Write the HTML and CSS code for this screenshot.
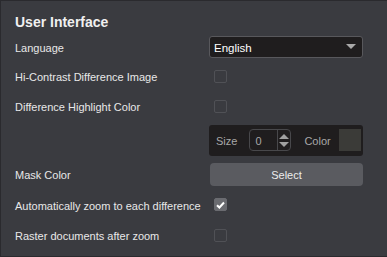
FILE: index.html
```html
<!DOCTYPE html>
<html lang="en">
<head>
  <meta charset="UTF-8" />
  <title>User Interface</title>
  <link rel="stylesheet" href="styles.css">
</head>
<body>
  <div class="panel">
    <div class="heading">User Interface</div>

    <div class="row row-first">
      <span class="label">Language</span>
      <div class="dropdown">
        <span class="dropdown-text">English</span>
        <span class="caret"></span>
      </div>
    </div>

    <div class="row">
      <span class="label">Hi-Contrast Difference Image</span>
      <span class="check"></span>
    </div>

    <div class="row">
      <span class="label">Difference Highlight Color</span>
      <span class="check"></span>
    </div>

    <div class="row row-tall">
      <span></span>
      <div class="highlight-box">
        <span class="dim">Size</span>
        <div class="spin">
          <span class="spin-value">0</span>
          <div class="spin-arrows">
            <span class="arrow-up"></span>
            <span class="arrow-down"></span>
          </div>
        </div>
        <span class="dim">Color</span>
        <span class="swatch"></span>
      </div>
    </div>

    <div class="row">
      <span class="label">Mask Color</span>
      <button class="select-btn">Select</button>
    </div>

    <div class="row row-wide">
      <span class="label">Automatically zoom to each difference</span>
      <span class="check checked">
        <svg width="9" height="8" viewBox="0 0 9 8"><path d="M1 4.2 L3.4 6.5 L8 1.5" fill="none" stroke="#fff" stroke-width="2"/></svg>
      </span>
    </div>

    <div class="row">
      <span class="label">Raster documents after zoom</span>
      <span class="check"></span>
    </div>
  </div>
</body>
</html>
```

FILE: styles.css
```css
* { margin: 0; padding: 0; box-sizing: border-box; }
body {
  background: #3a3b40;
  font-family: 'Liberation Sans', Arial, sans-serif;
  font-size: 11px;
  color: #e8e8e8;
}
.panel {
  width: 387px;
  height: 257px;
  border: 1px solid #2a2a2e;
  border-right: none;
  padding: 10px 0 0 14px;
}
.heading {
  font-weight: bold;
  font-size: 14px;
  color: #f0f0f0;
  height: 21px;
  line-height: 21px;
  padding-top: 1px;
}
.row {
  display: grid;
  grid-template-columns: 194px 154px;
  align-items: center;
  height: 30px;
}
.row-first {
  height: 29px;
}
.row-tall {
  height: 38px;
}
.row-wide {
  height: 31px;
}
.label {
  padding-top: 2px;
}
.dropdown {
  height: 22px;
  background: #1f1d1e;
  border: 1px solid #58585c;
  border-radius: 3px;
  display: flex;
  align-items: center;
  justify-content: space-between;
  padding: 0 6px 0 4px;
  color: #fff;
  font-size: 11.5px;
}
.dropdown-text {
  padding-top: 2px;
}
.caret {
  width: 0;
  height: 0;
  border-left: 5px solid transparent;
  border-right: 5px solid transparent;
  border-top: 5px solid #a9a9a9;
}
.check {
  width: 13px;
  height: 13px;
  margin-left: 5px;
  border: 1px solid #505156;
  border-radius: 2px;
  display: flex;
  align-items: center;
  justify-content: center;
}
.check.checked {
  background: #6a6b70;
  border-color: #6a6b70;
}
.highlight-box {
  height: 31px;
  background: #1f1d1e;
  border-radius: 3px;
  display: flex;
  align-items: center;
  padding: 0 2px 0 7px;
}
.dim {
  color: #a8a8a8;
  padding-top: 1px;
}
.spin {
  width: 42px;
  height: 22px;
  margin: 0 13px 0 12px;
  border: 1px solid #48484b;
  border-radius: 4px;
  display: flex;
}
.spin-value {
  flex: 1;
  padding: 1px 0 0 5px;
  line-height: 20px;
  color: #a8a8a8;
}
.spin-arrows {
  width: 13px;
  border-left: 1px solid #48484b;
  display: flex;
  flex-direction: column;
  align-items: center;
  justify-content: center;
  gap: 3px;
}
.arrow-up {
  border-left: 5px solid transparent;
  border-right: 5px solid transparent;
  border-bottom: 5px solid #a0a0a0;
}
.arrow-down {
  border-left: 5px solid transparent;
  border-right: 5px solid transparent;
  border-top: 5px solid #a0a0a0;
}
.swatch {
  width: 22px;
  height: 22px;
  margin-left: auto;
  background: #3b3b38;
}
.select-btn {
  height: 23px;
  width: 153px;
  margin-left: 1px;
  padding-top: 1px;
  background: #5a5b60;
  border: none;
  border-radius: 4px;
  color: #ececec;
  font-family: inherit;
  font-size: 11px;
}
```
